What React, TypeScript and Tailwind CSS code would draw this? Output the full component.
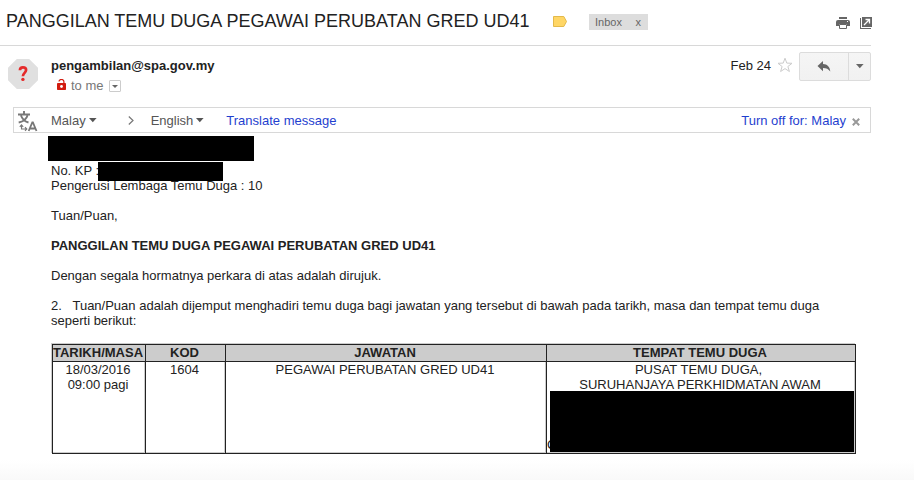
import type { ReactNode } from 'react';

const Caret = ({ className = '' }: { className?: string }) => (
  <svg width="8" height="5" viewBox="0 0 8 5" className={className}>
    <path d="M0 0h7.6L3.8 4.2z" fill="currentColor" />
  </svg>
);

const Header = () => (
  <header className="flex h-[46px] w-[871px] border-b border-[#d8d8d8] pl-[6px]">
    <h1 className="mt-[9px] w-[547px] whitespace-nowrap text-[18px] leading-[24px] text-[#222]">
      PANGGILAN TEMU DUGA PEGAWAI PERUBATAN GRED UD41
    </h1>
    <svg width="14" height="11" viewBox="0 0 14 11" className="mt-[16px]">
      <path d="M0.5 0.5h10.3L13.5 5.5 10.8 10.5H0.5z" fill="#ffd665" stroke="#e3b94b" />
    </svg>
    <div className="ml-[22px] mt-[14px] flex h-[16px] w-[59px] justify-between bg-[#ddd] pl-[6px] pr-[7px] text-[11px] leading-[16px] text-[#666]">
      <span>Inbox</span>
      <span>x</span>
    </div>
    <div className="-mr-px ml-auto mt-[17px] flex gap-[10px] text-[#666]">
      <svg width="14" height="12" viewBox="0 0 14 12" fill="currentColor">
        <path d="M3 0h8v2H3z" />
        <path d="M2 3h10a2 2 0 0 1 2 2v4h-3V7H3v2H0V5a2 2 0 0 1 2-2z" />
        <path d="M3.5 7.5h7v4h-7z" fill="#fff" stroke="currentColor" />
        <path d="M11 4h1v1h-1z" fill="#fff" />
      </svg>
      <svg width="12" height="12" viewBox="0 0 12 12" fill="currentColor">
        <path d="M0 1h1v10h10v1H0z" />
        <path d="M2 0h10v10H2z" />
        <path d="M4 8L9 3M5.5 2.5h4v4" fill="none" stroke="#fff" strokeWidth="1.3" />
      </svg>
    </div>
  </header>
);

const Sender = () => (
  <section className="flex h-[61px] w-[871px] pl-[8px]">
    <svg width="30" height="30" viewBox="0 0 30 30" className="mt-[13px]">
      <path d="M8.8 0h12.4L30 8.8v12.4L21.2 30H8.8L0 21.2V8.8z" fill="#e0e0e0" />
      <path d="M11.9 11.2C12 9.200 13.200 8.300 14.900 8.300c2 0 3.200 1.100 3.200 2.800 0 2.700-3.200 2.900-3.200 6.200" fill="none" stroke="#e52b2b" strokeWidth="2.7" />
      <circle cx="14.9" cy="20.4" r="1.7" fill="#e52b2b" />
    </svg>
    <div className="ml-[13px] mt-[12px] text-[13px]">
      <div className="font-bold leading-[16px] text-[#222]">pengambilan@spa.gov.my</div>
      <div className="mt-[4px] flex leading-[16px] text-[#777]">
        <svg width="9" height="11" viewBox="0 0 9 11" className="ml-[6px] mt-[1px]">
          <path d="M2 2.600a2.300 2 0 0 1 4.900 0V5" fill="none" stroke="#d21c10" strokeWidth="1.2" />
          <rect y="4" width="9" height="7" rx="0.8" fill="#d21c10" />
          <circle cx="4.5" cy="7.5" r="1.4" fill="#fff" />
        </svg>
        <span className="ml-[5px]">to me</span>
        <span className="ml-[5px] mt-[2px] flex h-[12px] w-[12px] items-center justify-center rounded-[1px] border border-[#ccc]">
          <svg width="6" height="3" viewBox="0 0 6 3">
            <path d="M0 0h6L3 3z" fill="#666" />
          </svg>
        </span>
      </div>
    </div>
    <div className="ml-auto mt-[6px] flex">
      <span className="mt-[6px] text-[13px] leading-[16px] text-[#222]">Feb 24</span>
      <svg width="16" height="16" viewBox="0 0 16 16" className="ml-[6px] mt-[5px]">
        <path d="M8 1.2l1.8 4.9 5.2.2-4.1 3.2 1.5 5L8 11.6l-4.4 2.9 1.5-5L1 6.3l5.2-.2z" fill="#fff" stroke="#ccc" />
      </svg>
      <div className="ml-[6px] flex h-[29px] w-[72px] rounded-[2px] border border-[#dcdcdc] bg-gradient-to-b from-[#f5f5f5] to-[#f1f1f1] text-[#666]">
        <div className="flex w-[49px] justify-center border-r border-[#dcdcdc] pt-[8px]">
          <svg width="14" height="11" viewBox="0 0 14 11">
            <path d="M6 0v3c4.5.2 7 3 7.3 7.5C11.5 8 9.3 7 6 7v3.2L0.500 5z" fill="currentColor" />
          </svg>
        </div>
        <Caret className="ml-[7px] mt-[11px]" />
      </div>
    </div>
  </section>
);

const TranslateBar = () => (
  <section className="ml-[13px] flex h-[26px] w-[858px] border border-[#d8d8d8] text-[13px] leading-[16px] text-[#555]">
    <svg width="20" height="22" viewBox="0 0 20 22" className="ml-[4px] mt-[3px]" fill="none" stroke="#777">
      <path d="M0 3.5h12M6 0v3.5M3 4.500c1.2 3.700 4 6 7.500 7M9.500 4.500C8.500 8 5.500 10.500 .7 11.500" strokeWidth="1.9" />
      <path d="M3.500 14v4H8.500M1.800 15.800l1.700-2 1.700 2M7 16.200l1.800 1.800L7 19.800" strokeWidth="1.1" />
      <path d="M10.700 20l3.600-8.500h.6l3.600 8.500M12 17.500h5.200" strokeWidth="1.8" />
    </svg>
    <span className="ml-[13px] mt-[5px]">Malay</span>
    <Caret className="ml-[3px] mt-[10px]" />
    <svg width="6" height="9" viewBox="0 0 6 9" className="ml-[31px] mt-[8px]">
      <path d="M0.8 0.5l4.2 4-4.2 4" fill="none" stroke="#777" strokeWidth="1.2" />
    </svg>
    <span className="ml-[17px] mt-[5px]">English</span>
    <Caret className="ml-[3px] mt-[10px]" />
    <span className="ml-[22px] mt-[5px] text-[#1f3fcf]">Translate message</span>
    <span className="ml-auto mt-[5px] text-[#1f3fcf]">Turn off for: Malay</span>
    <svg width="8" height="8" viewBox="0 0 8 8" className="ml-[6px] mr-[10px] mt-[10px]">
      <path d="M0.8 0.8l6.4 6.4M7.2 0.8L0.8 7.2" stroke="#999" strokeWidth="2" />
    </svg>
  </section>
);

const HeadCell = ({ children }: { children: ReactNode }) => (
  <th className="h-[17px] border border-[#222] bg-[#ccc] p-0 pb-px text-center font-bold leading-[15px]">
    <div className="-ml-[2px]">{children}</div>
  </th>
);

const Cell = ({ children }: { children?: ReactNode }) => (
  <td className="h-[92px] border border-[#222] p-0 pr-[2px] text-center align-top shadow-[inset_-1px_-1px_0_#ccc]">
    {children}
  </td>
);

const Schedule = () => (
  <table className="ml-px mt-[16px] w-[804px] table-fixed border-collapse shadow-[-1px_-1px_0_#ccc]">
    <colgroup>
      <col className="w-[93px]" />
      <col className="w-[80px]" />
      <col className="w-[321px]" />
      <col className="w-[309px]" />
    </colgroup>
    <thead>
      <tr>
        <HeadCell>TARIKH/MASA</HeadCell>
        <HeadCell>KOD</HeadCell>
        <HeadCell>JAWATAN</HeadCell>
        <HeadCell>TEMPAT TEMU DUGA</HeadCell>
      </tr>
    </thead>
    <tbody>
      <tr>
        <Cell>
          18/03/2016
          <br />
          09:00 pagi
        </Cell>
        <Cell>1604</Cell>
        <Cell>PEGAWAI PERUBATAN GRED UD41</Cell>
        <Cell>
          <div className="pr-[3px]">PUSAT TEMU DUGA,</div>
          <div>SURUHANJAYA PERKHIDMATAN AWAM</div>
          <div className="relative h-[61px]">
            <span className="absolute left-0 top-[45px]">C</span>
            <div className="absolute -top-px left-[3px] h-[61px] w-[304px] bg-black" />
          </div>
        </Cell>
      </tr>
    </tbody>
  </table>
);

export default function App() {
  return (
    <div className="flex h-[480px] w-[914px] flex-col overflow-hidden bg-white font-['Liberation_Sans',Arial,sans-serif]">
      <Header />
      <Sender />
      <TranslateBar />
      <main className="pl-[51px] text-[13px] leading-[15px] text-[#222]">
        <div className="-ml-[3px] mt-[3px] h-[25px] w-[206px] bg-black" />
        <p className="relative mt-[2px]">
          No. KP :
          <span className="absolute left-[47px] top-[-1px] h-[19px] w-[125px] bg-black" />
        </p>
        <p>Pengerusi Lembaga Temu Duga : 10</p>
        <p className="mt-[15px]">Tuan/Puan,</p>
        <p className="mt-[15px] font-bold">PANGGILAN TEMU DUGA PEGAWAI PERUBATAN GRED UD41</p>
        <p className="mt-[15px]">Dengan segala hormatnya perkara di atas adalah dirujuk.</p>
        <p className="mt-[15px] w-[800px]">
          2.&nbsp;&nbsp; Tuan/Puan adalah dijemput menghadiri temu duga bagi jawatan yang tersebut di bawah pada tarikh, masa dan tempat temu duga seperti berikut:
        </p>
        <Schedule />
      </main>
      <div className="mt-auto h-[20px] bg-gradient-to-b from-white to-[#f9f9f9]" />
    </div>
  );
}
